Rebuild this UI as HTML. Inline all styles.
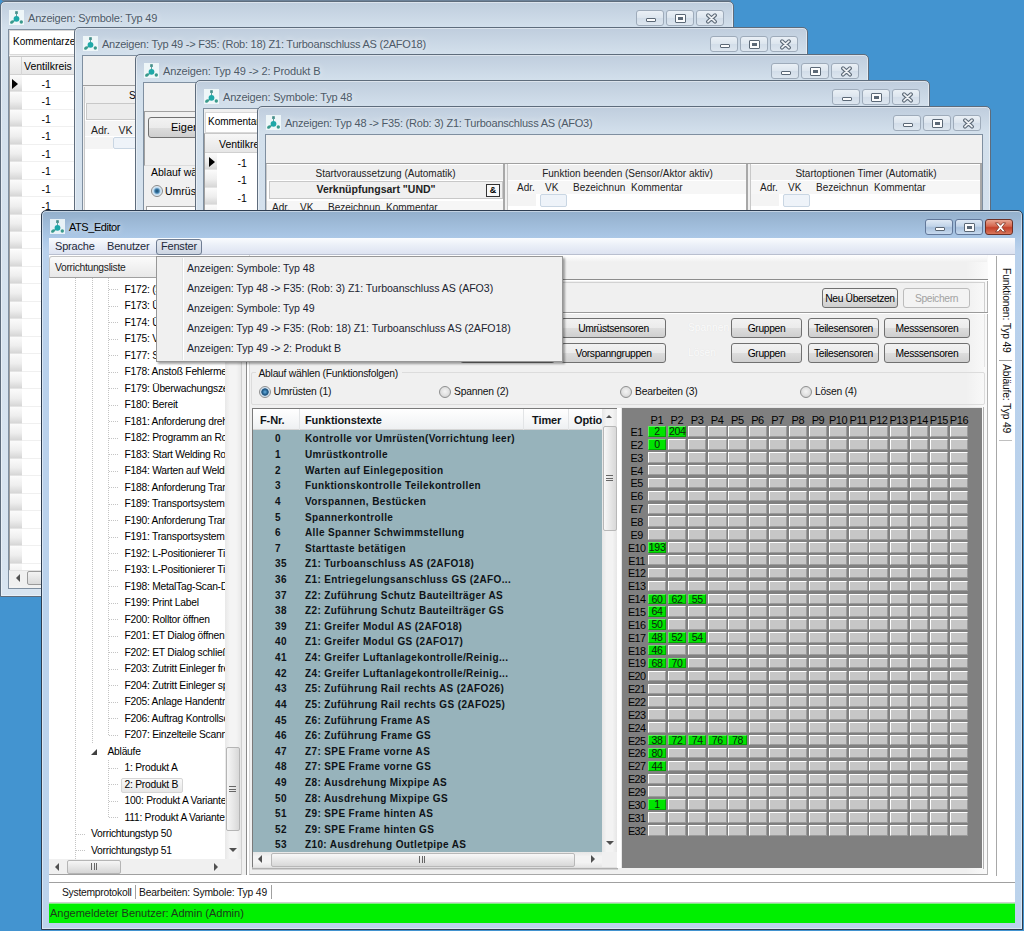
<!DOCTYPE html><html><head><meta charset="utf-8"><style>
*{box-sizing:border-box}
body{margin:0;width:1024px;height:931px;overflow:hidden;position:relative;background:#4394d0;font-family:"Liberation Sans",sans-serif;font-size:10px;color:#000}
.a{position:absolute}
.t{position:absolute;white-space:nowrap;line-height:1}
.win{position:absolute;border:1px solid #5e6c7c;border-radius:5px 5px 0 0;background:linear-gradient(#bfcddd 0,#d3e0ec 26px,#d8e4f0 100%);box-shadow:inset 0 0 0 1px rgba(255,255,255,.45)}
.win.act{border-color:#2e3d50;background:linear-gradient(#93afcb 0,#aac7e6 26px,#b9d1ec 40px,#bcd3ec 100%)}
.ttl{position:absolute;left:27px;top:10px;font-size:11px;color:#4d5a68;white-space:nowrap;letter-spacing:-0.1px;text-shadow:0 0 6px rgba(255,255,255,.9)}
.cli{position:absolute;background:#f0f0f0;border:1px solid #7f8fa0;overflow:hidden}
.tb{position:absolute;top:8px;height:16px;border:1px solid #9eabba;border-radius:3px;background:linear-gradient(#eaf0f6,#dce5ee 50%,#d2dde9 51%,#dde6ef)}
.btn{position:absolute;border:1px solid #707070;border-radius:3px;background:linear-gradient(#f2f2f2 0,#ebebeb 50%,#dddddd 51%,#cfcfcf 100%);text-align:center;font-size:10px;line-height:18px;white-space:nowrap;color:#000}

.tree{font-size:10.3px;letter-spacing:-0.25px;color:#000}
.dv{position:absolute;width:1px;background-image:linear-gradient(#c4c4c4 50%,transparent 50%);background-size:1px 2px}
.dh{position:absolute;height:1px;background-image:linear-gradient(90deg,#c4c4c4 50%,transparent 50%);background-size:2px 1px}
.cell{position:absolute;width:18.4px;height:10.6px;background:#c6c6c6;border-top:1px solid #fff;border-left:1px solid #fff;border-right:1px solid #9a9a9a;border-bottom:1px solid #9a9a9a}
.gc{background:#00e400;border-color:#5cf05c #00a800 #00a800 #5cf05c;font-size:10.5px;line-height:9px;text-align:center;color:#102010;letter-spacing:-0.3px}
.tr{font-weight:bold;font-size:11px;letter-spacing:-0.1px;color:#101418}
.tr2{font-weight:bold;font-size:10px;letter-spacing:0.38px;color:#0e1216}
.rad{position:absolute;width:12px;height:12px;border-radius:50%;border:1px solid #8e8f8f;background:radial-gradient(circle at 50% 45%,#f4f4f4 0,#e0e0e0 4px,#d0d0d0 6px)}
.rad.on{background:radial-gradient(circle at 50% 50%,#6ab0e0 0,#2a6a9a 2.2px,#1d4e78 3.3px,#c8dcec 4px,#e6eef6 6px)}
</style></head><body><div class="a" style="left:2px;top:0;width:729px;height:1px;background:#6c8198"></div><div class="win" style="left:0px;top:1px;width:734px;height:596px"><svg class="a" style="left:8px;top:8px" width="15" height="15" viewBox="0 0 15 15"><rect x="0" y="0" width="15" height="15" fill="#f4fcfc" opacity=".85"/><rect x="6.2" y="1.2" width="2.6" height="2.8" fill="#448c88"/><line x1="7.5" y1="3.5" x2="7.5" y2="7" stroke="#5aa4a0" stroke-width="1"/><line x1="7" y1="9.5" x2="3.5" y2="12" stroke="#3d9b90" stroke-width="1.4"/><ellipse cx="3" cy="12" rx="2.1" ry="1.5" transform="rotate(-35 3 12)" fill="#3a9a8c"/><circle cx="7.5" cy="8.8" r="2.9" fill="#1ea8a8"/><circle cx="12.3" cy="12" r="1.7" fill="#3a9a8c"/></svg><div class="ttl" style="letter-spacing:-0.18px">Anzeigen: Symbole: Typ 49</div><div class="tb" style="left:635px;width:28px;"><div class="a" style="left:8.5px;top:6.5px;width:10px;height:4.5px;border:1px solid #5b6876;border-radius:1px;background:#fbfcfd"></div></div><div class="tb" style="left:665px;width:28px;"><div class="a" style="left:8px;top:2.5px;width:11px;height:9px;border:1px solid #5b6876;border-radius:1px;background:#fbfcfd"><div class="a" style="left:2px;top:2px;width:5px;height:3px;background:#5b6876"></div></div></div><div class="tb" style="left:695px;width:28px;"><svg class="a" style="left:7.5px;top:2px" width="13" height="11" viewBox="0 0 13 11"><path d="M3 2.2 L10 8.6 M10 2.2 L3 8.6" stroke="#5d6a78" stroke-width="3.9" stroke-linecap="round"/><path d="M3 2.2 L10 8.6 M10 2.2 L3 8.6" stroke="#f0f3f6" stroke-width="1.7" stroke-linecap="round"/></svg></div><div class="cli" style="left:7px;top:27px;width:718px;height:560px"><div class="a" style="left:0px;top:0px;width:120px;height:25px;background:#fff;border:1px solid #d9d9d9"></div><div class="t" style="left:4px;top:7px;font-size:10px">Kommentarzeile</div><div class="a" style="left:0px;top:26px;width:710px;height:515px;background:#fff;border-left:1px solid #a0a0a0;border-top:1px solid #c8c8c8"></div><div class="a" style="left:1px;top:27px;width:700px;height:18px;background:linear-gradient(#f7f7f7,#e6e6e6);border-bottom:1px solid #d0d0d0"></div><div class="a" style="left:12px;top:27px;width:1px;height:18px;background:#d5d5d5"></div><div class="t" style="left:15px;top:31px;font-size:10.5px">Ventilkreis</div><div class="a" style="left:1px;top:45.0px;width:12px;height:17.45px;background:linear-gradient(#fbfbfb,#eeeeee 55%,#d6d6d6);border-bottom:1px solid #e4e4e4"></div><div class="a" style="left:13px;top:61.4px;width:690px;height:1px;background:#f0f0f0"></div><div class="t" style="left:32.5px;top:49.0px;font-size:10.5px">-1</div><div class="a" style="left:1px;top:62.45px;width:12px;height:17.45px;background:linear-gradient(#fbfbfb,#eeeeee 55%,#d6d6d6);border-bottom:1px solid #e4e4e4"></div><div class="a" style="left:13px;top:78.85px;width:690px;height:1px;background:#f0f0f0"></div><div class="t" style="left:32.5px;top:66.45px;font-size:10.5px">-1</div><div class="a" style="left:1px;top:79.9px;width:12px;height:17.45px;background:linear-gradient(#fbfbfb,#eeeeee 55%,#d6d6d6);border-bottom:1px solid #e4e4e4"></div><div class="a" style="left:13px;top:96.30000000000001px;width:690px;height:1px;background:#f0f0f0"></div><div class="t" style="left:32.5px;top:83.9px;font-size:10.5px">-1</div><div class="a" style="left:1px;top:97.35px;width:12px;height:17.45px;background:linear-gradient(#fbfbfb,#eeeeee 55%,#d6d6d6);border-bottom:1px solid #e4e4e4"></div><div class="a" style="left:13px;top:113.75px;width:690px;height:1px;background:#f0f0f0"></div><div class="t" style="left:32.5px;top:101.35px;font-size:10.5px">-1</div><div class="a" style="left:1px;top:114.80000000000001px;width:12px;height:17.45px;background:linear-gradient(#fbfbfb,#eeeeee 55%,#d6d6d6);border-bottom:1px solid #e4e4e4"></div><div class="a" style="left:13px;top:131.20000000000002px;width:690px;height:1px;background:#f0f0f0"></div><div class="t" style="left:32.5px;top:118.80000000000001px;font-size:10.5px">-1</div><div class="a" style="left:1px;top:132.25px;width:12px;height:17.45px;background:linear-gradient(#fbfbfb,#eeeeee 55%,#d6d6d6);border-bottom:1px solid #e4e4e4"></div><div class="a" style="left:13px;top:148.65px;width:690px;height:1px;background:#f0f0f0"></div><div class="t" style="left:32.5px;top:136.25px;font-size:10.5px">-1</div><div class="a" style="left:1px;top:149.7px;width:12px;height:17.45px;background:linear-gradient(#fbfbfb,#eeeeee 55%,#d6d6d6);border-bottom:1px solid #e4e4e4"></div><div class="a" style="left:13px;top:166.1px;width:690px;height:1px;background:#f0f0f0"></div><div class="t" style="left:32.5px;top:153.7px;font-size:10.5px">-1</div><div class="a" style="left:1px;top:167.14999999999998px;width:12px;height:17.45px;background:linear-gradient(#fbfbfb,#eeeeee 55%,#d6d6d6);border-bottom:1px solid #e4e4e4"></div><div class="a" style="left:13px;top:183.54999999999998px;width:690px;height:1px;background:#f0f0f0"></div><div class="t" style="left:32.5px;top:171.14999999999998px;font-size:10.5px">-1</div><div class="a" style="left:1px;top:184.6px;width:12px;height:17.45px;background:linear-gradient(#fbfbfb,#eeeeee 55%,#d6d6d6);border-bottom:1px solid #e4e4e4"></div><div class="a" style="left:13px;top:201.0px;width:690px;height:1px;background:#f0f0f0"></div><div class="t" style="left:32.5px;top:188.6px;font-size:10.5px">-1</div><div class="a" style="left:1px;top:202.04999999999998px;width:12px;height:17.45px;background:linear-gradient(#fbfbfb,#eeeeee 55%,#d6d6d6);border-bottom:1px solid #e4e4e4"></div><div class="a" style="left:13px;top:218.45px;width:690px;height:1px;background:#f0f0f0"></div><div class="a" style="left:1px;top:219.5px;width:12px;height:17.45px;background:linear-gradient(#fbfbfb,#eeeeee 55%,#d6d6d6);border-bottom:1px solid #e4e4e4"></div><div class="a" style="left:13px;top:235.9px;width:690px;height:1px;background:#f0f0f0"></div><div class="a" style="left:1px;top:236.95px;width:12px;height:17.45px;background:linear-gradient(#fbfbfb,#eeeeee 55%,#d6d6d6);border-bottom:1px solid #e4e4e4"></div><div class="a" style="left:13px;top:253.35px;width:690px;height:1px;background:#f0f0f0"></div><div class="a" style="left:1px;top:254.39999999999998px;width:12px;height:17.45px;background:linear-gradient(#fbfbfb,#eeeeee 55%,#d6d6d6);border-bottom:1px solid #e4e4e4"></div><div class="a" style="left:13px;top:270.79999999999995px;width:690px;height:1px;background:#f0f0f0"></div><div class="a" style="left:1px;top:271.85px;width:12px;height:17.45px;background:linear-gradient(#fbfbfb,#eeeeee 55%,#d6d6d6);border-bottom:1px solid #e4e4e4"></div><div class="a" style="left:13px;top:288.25px;width:690px;height:1px;background:#f0f0f0"></div><div class="a" style="left:1px;top:289.29999999999995px;width:12px;height:17.45px;background:linear-gradient(#fbfbfb,#eeeeee 55%,#d6d6d6);border-bottom:1px solid #e4e4e4"></div><div class="a" style="left:13px;top:305.69999999999993px;width:690px;height:1px;background:#f0f0f0"></div><div class="a" style="left:1px;top:306.75px;width:12px;height:17.45px;background:linear-gradient(#fbfbfb,#eeeeee 55%,#d6d6d6);border-bottom:1px solid #e4e4e4"></div><div class="a" style="left:13px;top:323.15px;width:690px;height:1px;background:#f0f0f0"></div><div class="a" style="left:1px;top:324.2px;width:12px;height:17.45px;background:linear-gradient(#fbfbfb,#eeeeee 55%,#d6d6d6);border-bottom:1px solid #e4e4e4"></div><div class="a" style="left:13px;top:340.59999999999997px;width:690px;height:1px;background:#f0f0f0"></div><div class="a" style="left:1px;top:341.65px;width:12px;height:17.45px;background:linear-gradient(#fbfbfb,#eeeeee 55%,#d6d6d6);border-bottom:1px solid #e4e4e4"></div><div class="a" style="left:13px;top:358.04999999999995px;width:690px;height:1px;background:#f0f0f0"></div><div class="a" style="left:1px;top:359.09999999999997px;width:12px;height:17.45px;background:linear-gradient(#fbfbfb,#eeeeee 55%,#d6d6d6);border-bottom:1px solid #e4e4e4"></div><div class="a" style="left:13px;top:375.49999999999994px;width:690px;height:1px;background:#f0f0f0"></div><div class="a" style="left:1px;top:376.55px;width:12px;height:17.45px;background:linear-gradient(#fbfbfb,#eeeeee 55%,#d6d6d6);border-bottom:1px solid #e4e4e4"></div><div class="a" style="left:13px;top:392.95px;width:690px;height:1px;background:#f0f0f0"></div><div class="a" style="left:1px;top:394.0px;width:12px;height:17.45px;background:linear-gradient(#fbfbfb,#eeeeee 55%,#d6d6d6);border-bottom:1px solid #e4e4e4"></div><div class="a" style="left:13px;top:410.4px;width:690px;height:1px;background:#f0f0f0"></div><div class="a" style="left:1px;top:411.45px;width:12px;height:17.45px;background:linear-gradient(#fbfbfb,#eeeeee 55%,#d6d6d6);border-bottom:1px solid #e4e4e4"></div><div class="a" style="left:13px;top:427.84999999999997px;width:690px;height:1px;background:#f0f0f0"></div><div class="a" style="left:1px;top:428.9px;width:12px;height:17.45px;background:linear-gradient(#fbfbfb,#eeeeee 55%,#d6d6d6);border-bottom:1px solid #e4e4e4"></div><div class="a" style="left:13px;top:445.29999999999995px;width:690px;height:1px;background:#f0f0f0"></div><div class="a" style="left:1px;top:446.34999999999997px;width:12px;height:17.45px;background:linear-gradient(#fbfbfb,#eeeeee 55%,#d6d6d6);border-bottom:1px solid #e4e4e4"></div><div class="a" style="left:13px;top:462.74999999999994px;width:690px;height:1px;background:#f0f0f0"></div><div class="a" style="left:1px;top:463.79999999999995px;width:12px;height:17.45px;background:linear-gradient(#fbfbfb,#eeeeee 55%,#d6d6d6);border-bottom:1px solid #e4e4e4"></div><div class="a" style="left:13px;top:480.19999999999993px;width:690px;height:1px;background:#f0f0f0"></div><div class="a" style="left:1px;top:481.25px;width:12px;height:17.45px;background:linear-gradient(#fbfbfb,#eeeeee 55%,#d6d6d6);border-bottom:1px solid #e4e4e4"></div><div class="a" style="left:13px;top:497.65px;width:690px;height:1px;background:#f0f0f0"></div><div class="a" style="left:1px;top:498.70000000000005px;width:12px;height:17.45px;background:linear-gradient(#fbfbfb,#eeeeee 55%,#d6d6d6);border-bottom:1px solid #e4e4e4"></div><div class="a" style="left:13px;top:515.1px;width:690px;height:1px;background:#f0f0f0"></div><div class="a" style="left:1px;top:516.15px;width:12px;height:17.45px;background:linear-gradient(#fbfbfb,#eeeeee 55%,#d6d6d6);border-bottom:1px solid #e4e4e4"></div><div class="a" style="left:13px;top:532.55px;width:690px;height:1px;background:#f0f0f0"></div><div class="a" style="left:1px;top:533.5999999999999px;width:12px;height:17.45px;background:linear-gradient(#fbfbfb,#eeeeee 55%,#d6d6d6);border-bottom:1px solid #e4e4e4"></div><div class="a" style="left:13px;top:549.9999999999999px;width:690px;height:1px;background:#f0f0f0"></div><div class="a" style="left:1px;top:551.05px;width:12px;height:17.45px;background:linear-gradient(#fbfbfb,#eeeeee 55%,#d6d6d6);border-bottom:1px solid #e4e4e4"></div><div class="a" style="left:13px;top:567.4499999999999px;width:690px;height:1px;background:#f0f0f0"></div><div class="a" style="left:3px;top:49px;width:0;height:0;border-left:6px solid #000;border-top:5px solid transparent;border-bottom:5px solid transparent"></div><div class="a" style="left:0px;top:540px;width:710px;height:16px;background:#f0f0f0;border-top:1px solid #e3e3e3"></div><div class="a" style="left:7px;top:544px;width:0;height:0;border-right:4px solid #505050;border-top:4px solid transparent;border-bottom:4px solid transparent"></div><div class="a" style="left:18px;top:541px;width:60px;height:14px;border:1px solid #9a9a9a;border-radius:2px;background:linear-gradient(#f3f3f3,#dadada)"></div></div></div><div class="win" style="left:74px;top:27px;width:734px;height:400px"><svg class="a" style="left:8px;top:8px" width="15" height="15" viewBox="0 0 15 15"><rect x="0" y="0" width="15" height="15" fill="#f4fcfc" opacity=".85"/><rect x="6.2" y="1.2" width="2.6" height="2.8" fill="#448c88"/><line x1="7.5" y1="3.5" x2="7.5" y2="7" stroke="#5aa4a0" stroke-width="1"/><line x1="7" y1="9.5" x2="3.5" y2="12" stroke="#3d9b90" stroke-width="1.4"/><ellipse cx="3" cy="12" rx="2.1" ry="1.5" transform="rotate(-35 3 12)" fill="#3a9a8c"/><circle cx="7.5" cy="8.8" r="2.9" fill="#1ea8a8"/><circle cx="12.3" cy="12" r="1.7" fill="#3a9a8c"/></svg><div class="ttl" style="letter-spacing:-0.24px">Anzeigen: Typ 49 -&gt; F35: (Rob: 18) Z1: Turboanschluss AS (2AFO18)</div><div class="tb" style="left:635px;width:28px;"><div class="a" style="left:8.5px;top:6.5px;width:10px;height:4.5px;border:1px solid #5b6876;border-radius:1px;background:#fbfcfd"></div></div><div class="tb" style="left:665px;width:28px;"><div class="a" style="left:8px;top:2.5px;width:11px;height:9px;border:1px solid #5b6876;border-radius:1px;background:#fbfcfd"><div class="a" style="left:2px;top:2px;width:5px;height:3px;background:#5b6876"></div></div></div><div class="tb" style="left:695px;width:28px;"><svg class="a" style="left:7.5px;top:2px" width="13" height="11" viewBox="0 0 13 11"><path d="M3 2.2 L10 8.6 M10 2.2 L3 8.6" stroke="#5d6a78" stroke-width="3.9" stroke-linecap="round"/><path d="M3 2.2 L10 8.6 M10 2.2 L3 8.6" stroke="#f0f3f6" stroke-width="1.7" stroke-linecap="round"/></svg></div><div class="cli" style="left:7px;top:27px;width:718px;height:360px"><div class="a" style="left:0;top:29px;width:720px;height:1px;background:#a0a0a0"></div><div class="a" style="left:1px;top:31px;width:700px;height:130px;background:#fff;border-left:1px solid #c8c8c8"></div><div class="a" style="left:2px;top:31px;width:700px;height:16px;background:#f0f0f0"></div><div class="t" style="left:46px;top:35px;font-size:10px">Startvoraussetzung</div><div class="a" style="left:3px;top:47px;width:700px;height:17px;background:#ececec;border:1px solid #c8c8c8"></div><div class="a" style="left:2px;top:65px;width:700px;height:15px;background:#f4f4f4"></div><div class="t" style="left:8px;top:69px;font-size:10.5px;color:#222">Adr.</div><div class="t" style="left:35.5px;top:69px;font-size:10.5px;color:#222">VK</div><div class="a" style="left:2px;top:81px;width:28px;height:12px;background:#f4f4f4"></div><div class="a" style="left:30px;top:81px;width:30px;height:12px;background:#eef3f9;border:1px solid #c9d6e3;border-radius:2px"></div></div></div><div class="win" style="left:135px;top:54px;width:734px;height:400px"><svg class="a" style="left:8px;top:8px" width="15" height="15" viewBox="0 0 15 15"><rect x="0" y="0" width="15" height="15" fill="#f4fcfc" opacity=".85"/><rect x="6.2" y="1.2" width="2.6" height="2.8" fill="#448c88"/><line x1="7.5" y1="3.5" x2="7.5" y2="7" stroke="#5aa4a0" stroke-width="1"/><line x1="7" y1="9.5" x2="3.5" y2="12" stroke="#3d9b90" stroke-width="1.4"/><ellipse cx="3" cy="12" rx="2.1" ry="1.5" transform="rotate(-35 3 12)" fill="#3a9a8c"/><circle cx="7.5" cy="8.8" r="2.9" fill="#1ea8a8"/><circle cx="12.3" cy="12" r="1.7" fill="#3a9a8c"/></svg><div class="ttl" style="letter-spacing:-0.13px">Anzeigen: Typ 49 -&gt; 2: Produkt B</div><div class="tb" style="left:635px;width:28px;"><div class="a" style="left:8.5px;top:6.5px;width:10px;height:4.5px;border:1px solid #5b6876;border-radius:1px;background:#fbfcfd"></div></div><div class="tb" style="left:665px;width:28px;"><div class="a" style="left:8px;top:2.5px;width:11px;height:9px;border:1px solid #5b6876;border-radius:1px;background:#fbfcfd"><div class="a" style="left:2px;top:2px;width:5px;height:3px;background:#5b6876"></div></div></div><div class="tb" style="left:695px;width:28px;"><svg class="a" style="left:7.5px;top:2px" width="13" height="11" viewBox="0 0 13 11"><path d="M3 2.2 L10 8.6 M10 2.2 L3 8.6" stroke="#5d6a78" stroke-width="3.9" stroke-linecap="round"/><path d="M3 2.2 L10 8.6 M10 2.2 L3 8.6" stroke="#f0f3f6" stroke-width="1.7" stroke-linecap="round"/></svg></div><div class="cli" style="left:7px;top:27px;width:718px;height:360px"><div class="a" style="left:0;top:28px;width:720px;height:1px;background:#a0a0a0"></div><div class="a" style="left:0px;top:29px;width:700px;height:54px;border-left:1px solid #a0a0a0;border-bottom:1px solid #dcdcdc"></div><div class="btn" style="left:4px;top:34px;width:110px;height:21px;line-height:19px;font-size:11px;text-align:left;padding-left:22px">Eigenschaften</div><div class="t" style="left:7px;top:84px;font-size:10.5px">Ablauf wählen (Funktionsfolgen)</div><div class="a" style="left:7px;top:102px;width:12px;height:12px;border-radius:50%;border:1px solid #8a8a8a;background:radial-gradient(circle,#1b4a6a 0,#3a7aa8 2px,#bcd8ee 3.5px,#e8f2fa 5px)"></div><div class="t" style="left:21px;top:103px;font-size:10.5px">Umrüsten (1)</div><div class="a" style="left:2px;top:123px;width:700px;height:10px;border-top:1px solid #a0a0a0;border-left:1px solid #a0a0a0;background:#fff"></div></div></div><div class="win" style="left:195px;top:80px;width:735px;height:400px"><svg class="a" style="left:8px;top:8px" width="15" height="15" viewBox="0 0 15 15"><rect x="0" y="0" width="15" height="15" fill="#f4fcfc" opacity=".85"/><rect x="6.2" y="1.2" width="2.6" height="2.8" fill="#448c88"/><line x1="7.5" y1="3.5" x2="7.5" y2="7" stroke="#5aa4a0" stroke-width="1"/><line x1="7" y1="9.5" x2="3.5" y2="12" stroke="#3d9b90" stroke-width="1.4"/><ellipse cx="3" cy="12" rx="2.1" ry="1.5" transform="rotate(-35 3 12)" fill="#3a9a8c"/><circle cx="7.5" cy="8.8" r="2.9" fill="#1ea8a8"/><circle cx="12.3" cy="12" r="1.7" fill="#3a9a8c"/></svg><div class="ttl" style="letter-spacing:-0.18px">Anzeigen: Symbole: Typ 48</div><div class="tb" style="left:636px;width:28px;"><div class="a" style="left:8.5px;top:6.5px;width:10px;height:4.5px;border:1px solid #5b6876;border-radius:1px;background:#fbfcfd"></div></div><div class="tb" style="left:666px;width:28px;"><div class="a" style="left:8px;top:2.5px;width:11px;height:9px;border:1px solid #5b6876;border-radius:1px;background:#fbfcfd"><div class="a" style="left:2px;top:2px;width:5px;height:3px;background:#5b6876"></div></div></div><div class="tb" style="left:696px;width:28px;"><svg class="a" style="left:7.5px;top:2px" width="13" height="11" viewBox="0 0 13 11"><path d="M3 2.2 L10 8.6 M10 2.2 L3 8.6" stroke="#5d6a78" stroke-width="3.9" stroke-linecap="round"/><path d="M3 2.2 L10 8.6 M10 2.2 L3 8.6" stroke="#f0f3f6" stroke-width="1.7" stroke-linecap="round"/></svg></div><div class="cli" style="left:7px;top:27px;width:719px;height:360px"><div class="a" style="left:1px;top:3px;width:200px;height:21px;background:#fff;border:1px solid #d9d9d9"></div><div class="t" style="left:4px;top:8px;font-size:10px">Kommentarzeile</div><div class="a" style="left:0px;top:24px;width:720px;height:100px;background:#fff;border-left:1px solid #a0a0a0;border-top:1px solid #c8c8c8"></div><div class="a" style="left:1px;top:25px;width:700px;height:19px;background:linear-gradient(#f7f7f7,#e6e6e6);border-bottom:1px solid #d0d0d0"></div><div class="t" style="left:15px;top:30px;font-size:10.5px">Ventilkreis</div><div class="a" style="left:1px;top:44.0px;width:12px;height:17.45px;background:linear-gradient(#fbfbfb,#eeeeee 55%,#d6d6d6);border-bottom:1px solid #e4e4e4"></div><div class="t" style="left:33.5px;top:49.0px;font-size:10.5px">-1</div><div class="a" style="left:1px;top:61.44999999999999px;width:12px;height:17.45px;background:linear-gradient(#fbfbfb,#eeeeee 55%,#d6d6d6);border-bottom:1px solid #e4e4e4"></div><div class="t" style="left:33.5px;top:66.44999999999999px;font-size:10.5px">-1</div><div class="a" style="left:1px;top:78.9px;width:12px;height:17.45px;background:linear-gradient(#fbfbfb,#eeeeee 55%,#d6d6d6);border-bottom:1px solid #e4e4e4"></div><div class="t" style="left:33.5px;top:83.9px;font-size:10.5px">-1</div><div class="a" style="left:1px;top:96.35px;width:12px;height:17.45px;background:linear-gradient(#fbfbfb,#eeeeee 55%,#d6d6d6);border-bottom:1px solid #e4e4e4"></div><div class="t" style="left:33.5px;top:101.35px;font-size:10.5px">-1</div><div class="a" style="left:5px;top:48px;width:0;height:0;border-left:6px solid #000;border-top:5px solid transparent;border-bottom:5px solid transparent"></div></div></div><div class="win" style="left:257px;top:106px;width:734px;height:400px"><svg class="a" style="left:8px;top:8px" width="15" height="15" viewBox="0 0 15 15"><rect x="0" y="0" width="15" height="15" fill="#f4fcfc" opacity=".85"/><rect x="6.2" y="1.2" width="2.6" height="2.8" fill="#448c88"/><line x1="7.5" y1="3.5" x2="7.5" y2="7" stroke="#5aa4a0" stroke-width="1"/><line x1="7" y1="9.5" x2="3.5" y2="12" stroke="#3d9b90" stroke-width="1.4"/><ellipse cx="3" cy="12" rx="2.1" ry="1.5" transform="rotate(-35 3 12)" fill="#3a9a8c"/><circle cx="7.5" cy="8.8" r="2.9" fill="#1ea8a8"/><circle cx="12.3" cy="12" r="1.7" fill="#3a9a8c"/></svg><div class="ttl" style="letter-spacing:-0.22px">Anzeigen: Typ 48 -&gt; F35: (Rob: 3) Z1: Turboanschluss AS (AFO3)</div><div class="tb" style="left:635px;width:28px;"><div class="a" style="left:8.5px;top:6.5px;width:10px;height:4.5px;border:1px solid #5b6876;border-radius:1px;background:#fbfcfd"></div></div><div class="tb" style="left:665px;width:28px;"><div class="a" style="left:8px;top:2.5px;width:11px;height:9px;border:1px solid #5b6876;border-radius:1px;background:#fbfcfd"><div class="a" style="left:2px;top:2px;width:5px;height:3px;background:#5b6876"></div></div></div><div class="tb" style="left:695px;width:28px;"><svg class="a" style="left:7.5px;top:2px" width="13" height="11" viewBox="0 0 13 11"><path d="M3 2.2 L10 8.6 M10 2.2 L3 8.6" stroke="#5d6a78" stroke-width="3.9" stroke-linecap="round"/><path d="M3 2.2 L10 8.6 M10 2.2 L3 8.6" stroke="#f0f3f6" stroke-width="1.7" stroke-linecap="round"/></svg></div><div class="cli" style="left:7px;top:27px;width:718px;height:360px"><div class="a" style="left:0;top:28px;width:720px;height:1px;background:#a0a0a0"></div><div class="a" style="left:0px;top:29px;width:239px;height:60px;background:#fff;border-left:1px solid #c8c8c8;border-right:2px solid #a8a8a8"></div><div class="a" style="left:1px;top:30px;width:236px;height:15px;background:#efefef"></div><div class="t" style="left:0px;width:239px;text-align:center;top:34px;font-size:10px;color:#222">Startvoraussetzung (Automatik)</div><div class="a" style="left:3px;top:46px;width:234px;height:18px;background:#f0f0f0;border:1px solid #c8c8c8"></div><div class="t" style="left:3px;width:214px;text-align:center;top:49px;font-size:10.5px;font-weight:bold;color:#222">Verknüpfungsart "UND"</div><div class="a" style="left:220px;top:49px;width:14px;height:13px;border:1px solid #333;background:#f8f8f8;font-size:9px;font-weight:bold;text-align:center;line-height:11px">&amp;</div><div class="a" style="left:1px;top:66px;width:236px;height:13px;background:#f6f6f6"></div><div class="t" style="left:6px;top:67.5px;font-size:10px;color:#222">Adr.</div><div class="t" style="left:34px;top:67.5px;font-size:10px;color:#222">VK</div><div class="t" style="left:62px;top:67.5px;font-size:10px;color:#222">Bezeichnun</div><div class="t" style="left:120px;top:67.5px;font-size:10px;color:#222">Kommentar</div><div class="a" style="left:241px;top:29px;width:241px;height:60px;background:#fff;border-left:1px solid #c8c8c8;border-right:2px solid #a8a8a8"></div><div class="a" style="left:242px;top:30px;width:238px;height:15px;background:#efefef"></div><div class="t" style="left:241px;width:241px;text-align:center;top:34px;font-size:10px;color:#222">Funktion beenden (Sensor/Aktor aktiv)</div><div class="a" style="left:242px;top:46px;width:238px;height:13px;background:#f6f6f6"></div><div class="t" style="left:251px;top:47.5px;font-size:10px;color:#222">Adr.</div><div class="t" style="left:279px;top:47.5px;font-size:10px;color:#222">VK</div><div class="t" style="left:307px;top:47.5px;font-size:10px;color:#222">Bezeichnun</div><div class="t" style="left:365px;top:47.5px;font-size:10px;color:#222">Kommentar</div><div class="a" style="left:242px;top:59px;width:28px;height:12px;background:#f4f4f4"></div><div class="a" style="left:274px;top:59px;width:27px;height:13px;background:#eef3f9;border:1px solid #c9d6e3;border-radius:2px"></div><div class="a" style="left:484px;top:29px;width:232px;height:60px;background:#fff;border-left:1px solid #c8c8c8;border-right:2px solid #a8a8a8"></div><div class="a" style="left:485px;top:30px;width:229px;height:15px;background:#efefef"></div><div class="t" style="left:484px;width:232px;text-align:center;top:34px;font-size:10px;color:#222">Startoptionen Timer (Automatik)</div><div class="a" style="left:485px;top:46px;width:229px;height:13px;background:#f6f6f6"></div><div class="t" style="left:494px;top:47.5px;font-size:10px;color:#222">Adr.</div><div class="t" style="left:522px;top:47.5px;font-size:10px;color:#222">VK</div><div class="t" style="left:550px;top:47.5px;font-size:10px;color:#222">Bezeichnun</div><div class="t" style="left:608px;top:47.5px;font-size:10px;color:#222">Kommentar</div><div class="a" style="left:485px;top:59px;width:28px;height:12px;background:#f4f4f4"></div><div class="a" style="left:517px;top:59px;width:27px;height:13px;background:#eef3f9;border:1px solid #c9d6e3;border-radius:2px"></div></div></div><div class="win act" style="left:41px;top:210px;width:982px;height:720px"><svg class="a" style="left:8px;top:8px" width="15" height="15" viewBox="0 0 15 15"><rect x="0" y="0" width="15" height="15" fill="#f4fcfc" opacity=".85"/><rect x="6.2" y="1.2" width="2.6" height="2.8" fill="#448c88"/><line x1="7.5" y1="3.5" x2="7.5" y2="7" stroke="#5aa4a0" stroke-width="1"/><line x1="7" y1="9.5" x2="3.5" y2="12" stroke="#3d9b90" stroke-width="1.4"/><ellipse cx="3" cy="12" rx="2.1" ry="1.5" transform="rotate(-35 3 12)" fill="#3a9a8c"/><circle cx="7.5" cy="8.8" r="2.9" fill="#1ea8a8"/><circle cx="12.3" cy="12" r="1.7" fill="#3a9a8c"/></svg><div class="ttl" style="color:#000;letter-spacing:-0.45px">ATS_Editor</div><div class="tb" style="left:883px;width:28px;background:linear-gradient(#dfe9f5,#c0d3e8 45%,#a9c1dd 55%,#c6d9ee);border-color:#62789a"><div class="a" style="left:8.5px;top:6.5px;width:10px;height:4.5px;border:1px solid #5b6876;border-radius:1px;background:#fbfcfd"></div></div><div class="tb" style="left:913px;width:28px;background:linear-gradient(#dfe9f5,#c0d3e8 45%,#a9c1dd 55%,#c6d9ee);border-color:#62789a"><div class="a" style="left:8px;top:2.5px;width:11px;height:9px;border:1px solid #5b6876;border-radius:1px;background:#fbfcfd"><div class="a" style="left:2px;top:2px;width:5px;height:3px;background:#5b6876"></div></div></div><div class="tb" style="left:943px;width:28px;background:linear-gradient(#e9a692,#d4664e 45%,#c4412a 55%,#d9785c);border-color:#6d3026"><svg class="a" style="left:7.5px;top:2px" width="13" height="11" viewBox="0 0 13 11"><path d="M1.5 0.8 L4.3 0.8 L6.5 3.3 L8.7 0.8 L11.5 0.8 L8 5.3 L11.5 9.8 L8.7 9.8 L6.5 7.3 L4.3 9.8 L1.5 9.8 L5 5.3 Z" fill="#fff" stroke="#7a3020" stroke-width="0.8"/></svg></div><div class="cli" style="left:7px;top:27px;width:966px;height:685px"></div></div><div class="a" style="left:49px;top:238px;width:966px;height:17px;background:linear-gradient(#fafcfe,#e9eef7 50%,#dde3f1);border-bottom:1px solid #b9bfcf"></div><div class="t" style="left:55px;top:241px;font-size:11px;letter-spacing:-0.2px;color:#1e2a3a">Sprache</div><div class="t" style="left:107px;top:241px;font-size:11px;letter-spacing:-0.2px;color:#1e2a3a">Benutzer</div><div class="a" style="left:156px;top:239px;width:46px;height:16px;border:1px solid #6f7d93;border-radius:3px;background:linear-gradient(#e6ebf2,#cdd5e2)"></div><div class="t" style="left:161px;top:241px;font-size:11px;letter-spacing:-0.2px;color:#1e2a3a">Fenster</div><div class="a" style="left:49px;top:255px;width:966px;height:648px;background:#fff"></div><div class="a" style="left:249px;top:255px;width:739px;height:620px;background:linear-gradient(90deg,#f0f0f0 97%,#fafafa);border-left:1px solid #dadada;border-bottom:1px solid #a8a8a8"></div><div class="a" style="left:987px;top:279px;width:1px;height:596px;background:#b4b4b4"></div><div class="a" style="left:250px;top:255px;width:737px;height:7px;background:linear-gradient(#fff,#f0f0f0)"></div><div class="a" style="left:49px;top:256px;width:192px;height:22px;background:linear-gradient(#fbfbfb,#e8e8e8);border:1px solid #c4c4c4;border-bottom-color:#a0a0a0;border-radius:3px 3px 0 0"></div><div class="t" style="left:55px;top:263px;font-size:10.3px;letter-spacing:-0.3px;color:#222">Vorrichtungsliste</div><div class="a" style="left:49px;top:278px;width:176px;height:581px;background:#fff"></div><div class="a" style="left:49px;top:859px;width:192px;height:16px;background:#f0f0f0;border-bottom:1px solid #a0a0a0"></div><div class="a" style="left:225px;top:278px;width:16px;height:581px;background:linear-gradient(90deg,#e8e8e8,#f4f4f4 30%,#f4f4f4 70%,#e8e8e8)"></div><div class="a" style="left:225.5px;top:747px;width:14px;height:84px;border:1px solid #b5b5b5;border-radius:2px;background:linear-gradient(90deg,#f6f6f6,#e8e8e8 50%,#d8d8d8)"></div><div class="a" style="left:229px;top:786px;width:7px;height:6px;border-top:1px solid #666;border-bottom:1px solid #666"></div><div class="a" style="left:229px;top:788.5px;width:7px;height:1px;background:#666"></div><div class="a" style="left:229px;top:848px;width:0;height:0;border-top:4px solid #505050;border-left:4px solid transparent;border-right:4px solid transparent"></div><div class="a" style="left:67px;top:860px;width:54px;height:14px;border:1px solid #b5b5b5;border-radius:2px;background:linear-gradient(#f6f6f6,#e6e6e6 50%,#d6d6d6)"></div><div class="a" style="left:91px;top:863px;width:6px;height:7px;border-left:1px solid #666;border-right:1px solid #666"></div><div class="a" style="left:93.5px;top:863px;width:1px;height:7px;background:#666"></div><div class="a" style="left:55px;top:863px;width:0;height:0;border-right:4px solid #505050;border-top:4px solid transparent;border-bottom:4px solid transparent"></div><div class="a" style="left:214px;top:863px;width:0;height:0;border-left:4px solid #505050;border-top:4px solid transparent;border-bottom:4px solid transparent"></div><div class="a" style="left:241px;top:256px;width:5px;height:619px;background:#f0f0f0;border-left:1px solid #d0d0d0"></div><div class="a" style="left:246px;top:256px;width:1px;height:619px;background:#8a8a8a"></div><div class="a" style="left:247px;top:256px;width:2px;height:619px;background:#fff"></div><div class="dv" style="left:75px;top:278px;height:581px"></div><div class="dv" style="left:92px;top:278px;height:465.4px"></div><div class="dv" style="left:108px;top:278px;height:457.9px"></div><div class="dv" style="left:108px;top:760.4px;height:58.0px"></div><div class="a" style="left:49px;top:278px;width:176px;height:581px;overflow:hidden"><div class="a" style="left:-49px;top:-278px;width:300px;height:900px"><div class="dh" style="left:109px;top:289.0px;width:9px"></div><div class="t tree" style="left:124.5px;top:284.9px">F172: (Sperre) Fehlerquit</div><div class="dh" style="left:109px;top:305.5px;width:9px"></div><div class="t tree" style="left:124.5px;top:301.4px">F173: Überwachung</div><div class="dh" style="left:109px;top:322.0px;width:9px"></div><div class="t tree" style="left:124.5px;top:317.9px">F174: Überwachung</div><div class="dh" style="left:109px;top:338.5px;width:9px"></div><div class="t tree" style="left:124.5px;top:334.4px">F175: Vorrichtung</div><div class="dh" style="left:109px;top:355.0px;width:9px"></div><div class="t tree" style="left:124.5px;top:350.9px">F177: Störung</div><div class="dh" style="left:109px;top:371.5px;width:9px"></div><div class="t tree" style="left:124.5px;top:367.4px">F178: Anstoß Fehlermeldung</div><div class="dh" style="left:109px;top:388.0px;width:9px"></div><div class="t tree" style="left:124.5px;top:383.9px">F179: Überwachungszeit</div><div class="dh" style="left:109px;top:404.5px;width:9px"></div><div class="t tree" style="left:124.5px;top:400.4px">F180: Bereit</div><div class="dh" style="left:109px;top:421.0px;width:9px"></div><div class="t tree" style="left:124.5px;top:416.9px">F181: Anforderung drehen</div><div class="dh" style="left:109px;top:437.5px;width:9px"></div><div class="t tree" style="left:124.5px;top:433.4px">F182: Programm an Roboter</div><div class="dh" style="left:109px;top:454.0px;width:9px"></div><div class="t tree" style="left:124.5px;top:449.9px">F183: Start Welding Roboter</div><div class="dh" style="left:109px;top:470.5px;width:9px"></div><div class="t tree" style="left:124.5px;top:466.4px">F184: Warten auf Welding</div><div class="dh" style="left:109px;top:487.0px;width:9px"></div><div class="t tree" style="left:124.5px;top:482.9px">F188: Anforderung Transport</div><div class="dh" style="left:109px;top:503.5px;width:9px"></div><div class="t tree" style="left:124.5px;top:499.4px">F189: Transportsystem</div><div class="dh" style="left:109px;top:520.0px;width:9px"></div><div class="t tree" style="left:124.5px;top:515.9px">F190: Anforderung Transport</div><div class="dh" style="left:109px;top:536.5px;width:9px"></div><div class="t tree" style="left:124.5px;top:532.4px">F191: Transportsystem</div><div class="dh" style="left:109px;top:553.0px;width:9px"></div><div class="t tree" style="left:124.5px;top:548.9px">F192: L-Positionierer Tisch</div><div class="dh" style="left:109px;top:569.5px;width:9px"></div><div class="t tree" style="left:124.5px;top:565.4px">F193: L-Positionierer Tisch</div><div class="dh" style="left:109px;top:586.0px;width:9px"></div><div class="t tree" style="left:124.5px;top:581.9px">F198: MetalTag-Scan-Daten</div><div class="dh" style="left:109px;top:602.5px;width:9px"></div><div class="t tree" style="left:124.5px;top:598.4px">F199: Print Label</div><div class="dh" style="left:109px;top:619.0px;width:9px"></div><div class="t tree" style="left:124.5px;top:614.9px">F200: Rolltor öffnen</div><div class="dh" style="left:109px;top:635.5px;width:9px"></div><div class="t tree" style="left:124.5px;top:631.4px">F201: ET Dialog öffnen</div><div class="dh" style="left:109px;top:652.0px;width:9px"></div><div class="t tree" style="left:124.5px;top:647.9px">F202: ET Dialog schließen</div><div class="dh" style="left:109px;top:668.5px;width:9px"></div><div class="t tree" style="left:124.5px;top:664.4px">F203: Zutritt Einleger frei</div><div class="dh" style="left:109px;top:685.0px;width:9px"></div><div class="t tree" style="left:124.5px;top:680.9px">F204: Zutritt Einleger sperren</div><div class="dh" style="left:109px;top:701.5px;width:9px"></div><div class="t tree" style="left:124.5px;top:697.4px">F205: Anlage Handentnahme</div><div class="dh" style="left:109px;top:718.0px;width:9px"></div><div class="t tree" style="left:124.5px;top:713.9px">F206: Auftrag Kontrollscan</div><div class="dh" style="left:109px;top:734.5px;width:9px"></div><div class="t tree" style="left:124.5px;top:730.4px">F207: Einzelteile Scannen</div><div class="a" style="left:91px;top:749.4px;width:0;height:0;border-bottom:6px solid #404040;border-left:6px solid transparent"></div><div class="t tree" style="left:107.5px;top:746.9px">Abläufe</div><div class="dh" style="left:109px;top:767.5px;width:9px"></div><div class="t tree" style="left:124.5px;top:763.4px">1: Produkt A</div><div class="dh" style="left:109px;top:784.0px;width:9px"></div><div class="a" style="left:120.5px;top:777.9px;width:62px;height:15px;border:1px solid #d5d5d5;border-radius:2px;background:linear-gradient(#fafafa,#e6e6e6)"></div><div class="t tree" style="left:124.5px;top:779.9px">2: Produkt B</div><div class="dh" style="left:109px;top:800.5px;width:9px"></div><div class="t tree" style="left:124.5px;top:796.4px">100: Produkt A Variante 1</div><div class="dh" style="left:109px;top:817.0px;width:9px"></div><div class="t tree" style="left:124.5px;top:812.9px">111: Produkt A Variante 2</div><div class="dh" style="left:76px;top:833.5px;width:9px"></div><div class="t tree" style="left:91px;top:829.4px">Vorrichtungstyp 50</div><div class="dh" style="left:76px;top:850.0px;width:9px"></div><div class="t tree" style="left:91px;top:845.9px">Vorrichtungstyp 51</div></div></div><div class="a" style="left:251px;top:279px;width:737px;height:1px;background:#8c8c8c"></div><div class="a" style="left:251px;top:280px;width:737px;height:1px;background:#fff"></div><div class="a" style="left:253px;top:282px;width:732px;height:1px;background:#d2d2d2"></div><div class="a" style="left:251px;top:312px;width:737px;height:1px;background:#9a9a9a"></div><div class="a" style="left:251px;top:313px;width:737px;height:1px;background:#fff"></div><div class="a" style="left:984px;top:282px;width:1px;height:30px;background:#cfcfcf"></div><div class="a" style="left:984px;top:314px;width:1px;height:53px;background:#e4e4e4"></div><div class="btn" style="left:822px;top:288px;width:76px;height:20px;line-height:19px;font-size:10.3px;letter-spacing:-0.35px;">Neu Übersetzen</div><div class="btn" style="left:903px;top:288px;width:67px;height:20px;line-height:19px;font-size:10.3px;letter-spacing:-0.35px;border-color:#bcbcbc;color:#a2a2a2;background:#f3f3f3;">Speichern</div><div class="btn" style="left:460px;top:318px;width:95px;height:20px;line-height:19px;font-size:10.3px;letter-spacing:-0.35px;">Umrüstgruppen</div><div class="btn" style="left:561px;top:318px;width:105px;height:20px;line-height:19px;font-size:10.3px;letter-spacing:-0.35px;">Umrüstsensoren</div><div class="btn" style="left:731px;top:318px;width:71px;height:20px;line-height:19px;font-size:10.3px;letter-spacing:-0.35px;">Gruppen</div><div class="btn" style="left:808px;top:318px;width:71px;height:20px;line-height:19px;font-size:10.3px;letter-spacing:-0.35px;">Teilesensoren</div><div class="btn" style="left:884px;top:318px;width:86px;height:20px;line-height:19px;font-size:10.3px;letter-spacing:-0.35px;">Messsensoren</div><div class="btn" style="left:460px;top:343px;width:95px;height:20px;line-height:19px;font-size:10.3px;letter-spacing:-0.35px;">Umrüstgruppen</div><div class="btn" style="left:561px;top:343px;width:105px;height:20px;line-height:19px;font-size:10.3px;letter-spacing:-0.35px;">Vorspanngruppen</div><div class="btn" style="left:731px;top:343px;width:71px;height:20px;line-height:19px;font-size:10.3px;letter-spacing:-0.35px;">Gruppen</div><div class="btn" style="left:808px;top:343px;width:71px;height:20px;line-height:19px;font-size:10.3px;letter-spacing:-0.35px;">Teilesensoren</div><div class="btn" style="left:884px;top:343px;width:86px;height:20px;line-height:19px;font-size:10.3px;letter-spacing:-0.35px;">Messsensoren</div><div class="t" style="left:688px;top:323px;font-size:10.3px;color:#fbfbfb;text-shadow:0 0 1px #ddd">Spannen</div><div class="t" style="left:688px;top:348px;font-size:10.3px;color:#fbfbfb;text-shadow:0 0 1px #ddd">Lösen</div><div class="a" style="left:251px;top:372px;width:734px;height:33px;border:1px solid #dcdcdc;border-radius:2px"></div><div class="a" style="left:256px;top:366px;width:146px;height:12px;background:#f0f0f0"></div><div class="t" style="left:258.5px;top:368.5px;font-size:10.3px;letter-spacing:-0.25px;color:#111">Ablauf wählen (Funktionsfolgen)</div><div class="rad on" style="left:258.5px;top:385.5px"></div><div class="t" style="left:273.5px;top:387px;font-size:10.3px;letter-spacing:-0.2px;color:#111">Umrüsten (1)</div><div class="rad" style="left:439px;top:385.5px"></div><div class="t" style="left:454px;top:387px;font-size:10.3px;letter-spacing:-0.2px;color:#111">Spannen (2)</div><div class="rad" style="left:620px;top:385.5px"></div><div class="t" style="left:635px;top:387px;font-size:10.3px;letter-spacing:-0.2px;color:#111">Bearbeiten (3)</div><div class="rad" style="left:800px;top:385.5px"></div><div class="t" style="left:815px;top:387px;font-size:10.3px;letter-spacing:-0.2px;color:#111">Lösen (4)</div><div class="a" style="left:252px;top:408px;width:366px;height:460px;background:#fff;border:1px solid #7a7a7a;border-right-color:#e0e0e0;border-bottom-color:#e0e0e0"></div><div class="a" style="left:253px;top:409px;width:349px;height:21px;background:linear-gradient(#ffffff,#f7f8f9 50%,#eef0f2);border-bottom:1px solid #d5d5d5"></div><div class="a" style="left:299px;top:409px;width:1px;height:21px;background:#e2e4e6"></div><div class="a" style="left:523px;top:409px;width:1px;height:21px;background:#e2e4e6"></div><div class="a" style="left:568px;top:409px;width:1px;height:21px;background:#e2e4e6"></div><div class="t tr" style="left:260px;top:414.5px">F-Nr.</div><div class="t tr" style="left:305px;top:414.5px">Funktionstexte</div><div class="t tr" style="left:532px;top:414.5px">Timer</div><div class="t tr" style="left:574px;top:414.5px">Optio</div><div class="a" style="left:253px;top:430px;width:349px;height:422px;background:#97b3bb"></div><div class="a" style="left:253px;top:430px;width:349px;height:422px;overflow:hidden"><div class="a" style="left:-253px;top:-430px;width:700px;height:900px"><div class="t tr2" style="left:275px;top:434.4px">0</div><div class="t tr2" style="left:305px;top:434.4px">Kontrolle vor Umrüsten(Vorrichtung leer)</div><div class="t tr2" style="left:275px;top:450.0px">1</div><div class="t tr2" style="left:305px;top:450.0px">Umrüstkontrolle</div><div class="t tr2" style="left:275px;top:465.6px">2</div><div class="t tr2" style="left:305px;top:465.6px">Warten auf Einlegeposition</div><div class="t tr2" style="left:275px;top:481.2px">3</div><div class="t tr2" style="left:305px;top:481.2px">Funktionskontrolle Teilekontrollen</div><div class="t tr2" style="left:275px;top:496.9px">4</div><div class="t tr2" style="left:305px;top:496.9px">Vorspannen, Bestücken</div><div class="t tr2" style="left:275px;top:512.5px">5</div><div class="t tr2" style="left:305px;top:512.5px">Spannerkontrolle</div><div class="t tr2" style="left:275px;top:528.1px">6</div><div class="t tr2" style="left:305px;top:528.1px">Alle Spanner Schwimmstellung</div><div class="t tr2" style="left:275px;top:543.7px">7</div><div class="t tr2" style="left:305px;top:543.7px">Starttaste betätigen</div><div class="t tr2" style="left:275px;top:559.3px">35</div><div class="t tr2" style="left:305px;top:559.3px">Z1: Turboanschluss AS (2AFO18)</div><div class="t tr2" style="left:275px;top:574.9px">36</div><div class="t tr2" style="left:305px;top:574.9px">Z1: Entriegelungsanschluss GS (2AFO...</div><div class="t tr2" style="left:275px;top:590.5px">37</div><div class="t tr2" style="left:305px;top:590.5px">Z2: Zuführung Schutz Bauteilträger AS</div><div class="t tr2" style="left:275px;top:606.2px">38</div><div class="t tr2" style="left:305px;top:606.2px">Z2: Zuführung Schutz Bauteilträger GS</div><div class="t tr2" style="left:275px;top:621.8px">39</div><div class="t tr2" style="left:305px;top:621.8px">Z1: Greifer Modul AS (2AFO18)</div><div class="t tr2" style="left:275px;top:637.4px">40</div><div class="t tr2" style="left:305px;top:637.4px">Z1: Greifer Modul GS (2AFO17)</div><div class="t tr2" style="left:275px;top:653.0px">41</div><div class="t tr2" style="left:305px;top:653.0px">Z4: Greifer Luftanlagekontrolle/Reinig...</div><div class="t tr2" style="left:275px;top:668.6px">42</div><div class="t tr2" style="left:305px;top:668.6px">Z4: Greifer Luftanlagekontrolle/Reinig...</div><div class="t tr2" style="left:275px;top:684.2px">43</div><div class="t tr2" style="left:305px;top:684.2px">Z5: Zuführung Rail rechts AS (2AFO26)</div><div class="t tr2" style="left:275px;top:699.9px">44</div><div class="t tr2" style="left:305px;top:699.9px">Z5: Zuführung Rail rechts GS (2AFO25)</div><div class="t tr2" style="left:275px;top:715.5px">45</div><div class="t tr2" style="left:305px;top:715.5px">Z6: Zuführung Frame AS</div><div class="t tr2" style="left:275px;top:731.1px">46</div><div class="t tr2" style="left:305px;top:731.1px">Z6: Zuführung Frame GS</div><div class="t tr2" style="left:275px;top:746.7px">47</div><div class="t tr2" style="left:305px;top:746.7px">Z7: SPE Frame vorne AS</div><div class="t tr2" style="left:275px;top:762.3px">48</div><div class="t tr2" style="left:305px;top:762.3px">Z7: SPE Frame vorne GS</div><div class="t tr2" style="left:275px;top:777.9px">49</div><div class="t tr2" style="left:305px;top:777.9px">Z8: Ausdrehung Mixpipe AS</div><div class="t tr2" style="left:275px;top:793.5px">50</div><div class="t tr2" style="left:305px;top:793.5px">Z8: Ausdrehung Mixpipe GS</div><div class="t tr2" style="left:275px;top:809.2px">51</div><div class="t tr2" style="left:305px;top:809.2px">Z9: SPE Frame hinten AS</div><div class="t tr2" style="left:275px;top:824.8px">52</div><div class="t tr2" style="left:305px;top:824.8px">Z9: SPE Frame hinten GS</div><div class="t tr2" style="left:275px;top:840.4px">53</div><div class="t tr2" style="left:305px;top:840.4px">Z10: Ausdrehung Outletpipe AS</div></div></div><div class="a" style="left:602px;top:409px;width:15px;height:443px;background:linear-gradient(90deg,#e6e6e6,#f3f3f3 30%,#f3f3f3 70%,#e6e6e6)"></div><div class="a" style="left:606px;top:415px;width:0;height:0;border-bottom:3.5px solid #505050;border-left:3.5px solid transparent;border-right:3.5px solid transparent"></div><div class="a" style="left:602.5px;top:426px;width:14px;height:105px;border:1px solid #b8b8b8;border-radius:2px;background:linear-gradient(90deg,#f8f8f8,#e8e8e8 50%,#d8d8d8)"></div><div class="a" style="left:606px;top:475px;width:7px;height:6px;border-top:1px solid #666;border-bottom:1px solid #666"></div><div class="a" style="left:606px;top:477.5px;width:7px;height:1px;background:#666"></div><div class="a" style="left:606px;top:841px;width:0;height:0;border-top:4px solid #505050;border-left:4px solid transparent;border-right:4px solid transparent"></div><div class="a" style="left:253px;top:852px;width:364px;height:15px;background:linear-gradient(#e6e6e6,#f3f3f3 30%,#f3f3f3 70%,#e6e6e6)"></div><div class="a" style="left:258px;top:855px;width:0;height:0;border-right:4px solid #505050;border-top:4px solid transparent;border-bottom:4px solid transparent"></div><div class="a" style="left:591px;top:855px;width:0;height:0;border-left:4px solid #505050;border-top:4px solid transparent;border-bottom:4px solid transparent"></div><div class="a" style="left:271px;top:852.5px;width:304px;height:14px;border:1px solid #b8b8b8;border-radius:2px;background:linear-gradient(#f8f8f8,#e8e8e8 50%,#d8d8d8)"></div><div class="a" style="left:419px;top:856px;width:6px;height:7px;border-left:1px solid #666;border-right:1px solid #666"></div><div class="a" style="left:421.5px;top:856px;width:1px;height:7px;background:#666"></div><div class="a" style="left:602px;top:852px;width:15px;height:15px;background:#f0f0f0"></div><div class="a" style="left:617px;top:408px;width:4px;height:460px;background:#fff"></div><div class="a" style="left:621px;top:407px;width:362px;height:461px;background:#808080;border-left:1px solid #e8e8e8;border-top:1px solid #e8e8e8"></div><div class="a" style="left:252px;top:868px;width:366px;height:2px;background:linear-gradient(#a0a0a0,#e0e0e0)"></div><div class="a" style="left:982px;top:407px;width:2px;height:462px;background:#fafafa;border-right:1px solid #b0b0b0"></div><div class="t" style="left:643.8px;width:26px;text-align:center;top:415px;font-size:11px;letter-spacing:-0.4px;color:#000">P1</div><div class="t" style="left:663.9px;width:26px;text-align:center;top:415px;font-size:11px;letter-spacing:-0.4px;color:#000">P2</div><div class="t" style="left:684.1px;width:26px;text-align:center;top:415px;font-size:11px;letter-spacing:-0.4px;color:#000">P3</div><div class="t" style="left:704.2px;width:26px;text-align:center;top:415px;font-size:11px;letter-spacing:-0.4px;color:#000">P4</div><div class="t" style="left:724.4px;width:26px;text-align:center;top:415px;font-size:11px;letter-spacing:-0.4px;color:#000">P5</div><div class="t" style="left:744.5px;width:26px;text-align:center;top:415px;font-size:11px;letter-spacing:-0.4px;color:#000">P6</div><div class="t" style="left:764.7px;width:26px;text-align:center;top:415px;font-size:11px;letter-spacing:-0.4px;color:#000">P7</div><div class="t" style="left:784.8px;width:26px;text-align:center;top:415px;font-size:11px;letter-spacing:-0.4px;color:#000">P8</div><div class="t" style="left:805.0px;width:26px;text-align:center;top:415px;font-size:11px;letter-spacing:-0.4px;color:#000">P9</div><div class="t" style="left:825.1px;width:26px;text-align:center;top:415px;font-size:11px;letter-spacing:-0.4px;color:#000">P10</div><div class="t" style="left:845.3px;width:26px;text-align:center;top:415px;font-size:11px;letter-spacing:-0.4px;color:#000">P11</div><div class="t" style="left:865.4px;width:26px;text-align:center;top:415px;font-size:11px;letter-spacing:-0.4px;color:#000">P12</div><div class="t" style="left:885.6px;width:26px;text-align:center;top:415px;font-size:11px;letter-spacing:-0.4px;color:#000">P13</div><div class="t" style="left:905.8px;width:26px;text-align:center;top:415px;font-size:11px;letter-spacing:-0.4px;color:#000">P14</div><div class="t" style="left:925.9px;width:26px;text-align:center;top:415px;font-size:11px;letter-spacing:-0.4px;color:#000">P15</div><div class="t" style="left:946.0px;width:26px;text-align:center;top:415px;font-size:11px;letter-spacing:-0.4px;color:#000">P16</div><div class="t" style="left:621.6px;width:30px;text-align:center;top:426.9px;font-size:10.8px;letter-spacing:-0.6px;color:#000">E1</div><div class="cell gc" style="left:647.8px;top:426.3px">2</div><div class="cell gc" style="left:667.9px;top:426.3px">204</div><div class="cell" style="left:688.1px;top:426.3px"></div><div class="cell" style="left:708.2px;top:426.3px"></div><div class="cell" style="left:728.4px;top:426.3px"></div><div class="cell" style="left:748.5px;top:426.3px"></div><div class="cell" style="left:768.7px;top:426.3px"></div><div class="cell" style="left:788.8px;top:426.3px"></div><div class="cell" style="left:809.0px;top:426.3px"></div><div class="cell" style="left:829.1px;top:426.3px"></div><div class="cell" style="left:849.3px;top:426.3px"></div><div class="cell" style="left:869.4px;top:426.3px"></div><div class="cell" style="left:889.6px;top:426.3px"></div><div class="cell" style="left:909.8px;top:426.3px"></div><div class="cell" style="left:929.9px;top:426.3px"></div><div class="cell" style="left:950.0px;top:426.3px"></div><div class="t" style="left:621.6px;width:30px;text-align:center;top:439.8px;font-size:10.8px;letter-spacing:-0.6px;color:#000">E2</div><div class="cell gc" style="left:647.8px;top:439.2px">0</div><div class="cell" style="left:667.9px;top:439.2px"></div><div class="cell" style="left:688.1px;top:439.2px"></div><div class="cell" style="left:708.2px;top:439.2px"></div><div class="cell" style="left:728.4px;top:439.2px"></div><div class="cell" style="left:748.5px;top:439.2px"></div><div class="cell" style="left:768.7px;top:439.2px"></div><div class="cell" style="left:788.8px;top:439.2px"></div><div class="cell" style="left:809.0px;top:439.2px"></div><div class="cell" style="left:829.1px;top:439.2px"></div><div class="cell" style="left:849.3px;top:439.2px"></div><div class="cell" style="left:869.4px;top:439.2px"></div><div class="cell" style="left:889.6px;top:439.2px"></div><div class="cell" style="left:909.8px;top:439.2px"></div><div class="cell" style="left:929.9px;top:439.2px"></div><div class="cell" style="left:950.0px;top:439.2px"></div><div class="t" style="left:621.6px;width:30px;text-align:center;top:452.6px;font-size:10.8px;letter-spacing:-0.6px;color:#000">E3</div><div class="cell" style="left:647.8px;top:452.0px"></div><div class="cell" style="left:667.9px;top:452.0px"></div><div class="cell" style="left:688.1px;top:452.0px"></div><div class="cell" style="left:708.2px;top:452.0px"></div><div class="cell" style="left:728.4px;top:452.0px"></div><div class="cell" style="left:748.5px;top:452.0px"></div><div class="cell" style="left:768.7px;top:452.0px"></div><div class="cell" style="left:788.8px;top:452.0px"></div><div class="cell" style="left:809.0px;top:452.0px"></div><div class="cell" style="left:829.1px;top:452.0px"></div><div class="cell" style="left:849.3px;top:452.0px"></div><div class="cell" style="left:869.4px;top:452.0px"></div><div class="cell" style="left:889.6px;top:452.0px"></div><div class="cell" style="left:909.8px;top:452.0px"></div><div class="cell" style="left:929.9px;top:452.0px"></div><div class="cell" style="left:950.0px;top:452.0px"></div><div class="t" style="left:621.6px;width:30px;text-align:center;top:465.5px;font-size:10.8px;letter-spacing:-0.6px;color:#000">E4</div><div class="cell" style="left:647.8px;top:464.9px"></div><div class="cell" style="left:667.9px;top:464.9px"></div><div class="cell" style="left:688.1px;top:464.9px"></div><div class="cell" style="left:708.2px;top:464.9px"></div><div class="cell" style="left:728.4px;top:464.9px"></div><div class="cell" style="left:748.5px;top:464.9px"></div><div class="cell" style="left:768.7px;top:464.9px"></div><div class="cell" style="left:788.8px;top:464.9px"></div><div class="cell" style="left:809.0px;top:464.9px"></div><div class="cell" style="left:829.1px;top:464.9px"></div><div class="cell" style="left:849.3px;top:464.9px"></div><div class="cell" style="left:869.4px;top:464.9px"></div><div class="cell" style="left:889.6px;top:464.9px"></div><div class="cell" style="left:909.8px;top:464.9px"></div><div class="cell" style="left:929.9px;top:464.9px"></div><div class="cell" style="left:950.0px;top:464.9px"></div><div class="t" style="left:621.6px;width:30px;text-align:center;top:478.3px;font-size:10.8px;letter-spacing:-0.6px;color:#000">E5</div><div class="cell" style="left:647.8px;top:477.7px"></div><div class="cell" style="left:667.9px;top:477.7px"></div><div class="cell" style="left:688.1px;top:477.7px"></div><div class="cell" style="left:708.2px;top:477.7px"></div><div class="cell" style="left:728.4px;top:477.7px"></div><div class="cell" style="left:748.5px;top:477.7px"></div><div class="cell" style="left:768.7px;top:477.7px"></div><div class="cell" style="left:788.8px;top:477.7px"></div><div class="cell" style="left:809.0px;top:477.7px"></div><div class="cell" style="left:829.1px;top:477.7px"></div><div class="cell" style="left:849.3px;top:477.7px"></div><div class="cell" style="left:869.4px;top:477.7px"></div><div class="cell" style="left:889.6px;top:477.7px"></div><div class="cell" style="left:909.8px;top:477.7px"></div><div class="cell" style="left:929.9px;top:477.7px"></div><div class="cell" style="left:950.0px;top:477.7px"></div><div class="t" style="left:621.6px;width:30px;text-align:center;top:491.2px;font-size:10.8px;letter-spacing:-0.6px;color:#000">E6</div><div class="cell" style="left:647.8px;top:490.6px"></div><div class="cell" style="left:667.9px;top:490.6px"></div><div class="cell" style="left:688.1px;top:490.6px"></div><div class="cell" style="left:708.2px;top:490.6px"></div><div class="cell" style="left:728.4px;top:490.6px"></div><div class="cell" style="left:748.5px;top:490.6px"></div><div class="cell" style="left:768.7px;top:490.6px"></div><div class="cell" style="left:788.8px;top:490.6px"></div><div class="cell" style="left:809.0px;top:490.6px"></div><div class="cell" style="left:829.1px;top:490.6px"></div><div class="cell" style="left:849.3px;top:490.6px"></div><div class="cell" style="left:869.4px;top:490.6px"></div><div class="cell" style="left:889.6px;top:490.6px"></div><div class="cell" style="left:909.8px;top:490.6px"></div><div class="cell" style="left:929.9px;top:490.6px"></div><div class="cell" style="left:950.0px;top:490.6px"></div><div class="t" style="left:621.6px;width:30px;text-align:center;top:504.1px;font-size:10.8px;letter-spacing:-0.6px;color:#000">E7</div><div class="cell" style="left:647.8px;top:503.5px"></div><div class="cell" style="left:667.9px;top:503.5px"></div><div class="cell" style="left:688.1px;top:503.5px"></div><div class="cell" style="left:708.2px;top:503.5px"></div><div class="cell" style="left:728.4px;top:503.5px"></div><div class="cell" style="left:748.5px;top:503.5px"></div><div class="cell" style="left:768.7px;top:503.5px"></div><div class="cell" style="left:788.8px;top:503.5px"></div><div class="cell" style="left:809.0px;top:503.5px"></div><div class="cell" style="left:829.1px;top:503.5px"></div><div class="cell" style="left:849.3px;top:503.5px"></div><div class="cell" style="left:869.4px;top:503.5px"></div><div class="cell" style="left:889.6px;top:503.5px"></div><div class="cell" style="left:909.8px;top:503.5px"></div><div class="cell" style="left:929.9px;top:503.5px"></div><div class="cell" style="left:950.0px;top:503.5px"></div><div class="t" style="left:621.6px;width:30px;text-align:center;top:516.9px;font-size:10.8px;letter-spacing:-0.6px;color:#000">E8</div><div class="cell" style="left:647.8px;top:516.3px"></div><div class="cell" style="left:667.9px;top:516.3px"></div><div class="cell" style="left:688.1px;top:516.3px"></div><div class="cell" style="left:708.2px;top:516.3px"></div><div class="cell" style="left:728.4px;top:516.3px"></div><div class="cell" style="left:748.5px;top:516.3px"></div><div class="cell" style="left:768.7px;top:516.3px"></div><div class="cell" style="left:788.8px;top:516.3px"></div><div class="cell" style="left:809.0px;top:516.3px"></div><div class="cell" style="left:829.1px;top:516.3px"></div><div class="cell" style="left:849.3px;top:516.3px"></div><div class="cell" style="left:869.4px;top:516.3px"></div><div class="cell" style="left:889.6px;top:516.3px"></div><div class="cell" style="left:909.8px;top:516.3px"></div><div class="cell" style="left:929.9px;top:516.3px"></div><div class="cell" style="left:950.0px;top:516.3px"></div><div class="t" style="left:621.6px;width:30px;text-align:center;top:529.8px;font-size:10.8px;letter-spacing:-0.6px;color:#000">E9</div><div class="cell" style="left:647.8px;top:529.2px"></div><div class="cell" style="left:667.9px;top:529.2px"></div><div class="cell" style="left:688.1px;top:529.2px"></div><div class="cell" style="left:708.2px;top:529.2px"></div><div class="cell" style="left:728.4px;top:529.2px"></div><div class="cell" style="left:748.5px;top:529.2px"></div><div class="cell" style="left:768.7px;top:529.2px"></div><div class="cell" style="left:788.8px;top:529.2px"></div><div class="cell" style="left:809.0px;top:529.2px"></div><div class="cell" style="left:829.1px;top:529.2px"></div><div class="cell" style="left:849.3px;top:529.2px"></div><div class="cell" style="left:869.4px;top:529.2px"></div><div class="cell" style="left:889.6px;top:529.2px"></div><div class="cell" style="left:909.8px;top:529.2px"></div><div class="cell" style="left:929.9px;top:529.2px"></div><div class="cell" style="left:950.0px;top:529.2px"></div><div class="t" style="left:621.6px;width:30px;text-align:center;top:542.6px;font-size:10.8px;letter-spacing:-0.6px;color:#000">E10</div><div class="cell gc" style="left:647.8px;top:542.0px">193</div><div class="cell" style="left:667.9px;top:542.0px"></div><div class="cell" style="left:688.1px;top:542.0px"></div><div class="cell" style="left:708.2px;top:542.0px"></div><div class="cell" style="left:728.4px;top:542.0px"></div><div class="cell" style="left:748.5px;top:542.0px"></div><div class="cell" style="left:768.7px;top:542.0px"></div><div class="cell" style="left:788.8px;top:542.0px"></div><div class="cell" style="left:809.0px;top:542.0px"></div><div class="cell" style="left:829.1px;top:542.0px"></div><div class="cell" style="left:849.3px;top:542.0px"></div><div class="cell" style="left:869.4px;top:542.0px"></div><div class="cell" style="left:889.6px;top:542.0px"></div><div class="cell" style="left:909.8px;top:542.0px"></div><div class="cell" style="left:929.9px;top:542.0px"></div><div class="cell" style="left:950.0px;top:542.0px"></div><div class="t" style="left:621.6px;width:30px;text-align:center;top:555.5px;font-size:10.8px;letter-spacing:-0.6px;color:#000">E11</div><div class="cell" style="left:647.8px;top:554.9px"></div><div class="cell" style="left:667.9px;top:554.9px"></div><div class="cell" style="left:688.1px;top:554.9px"></div><div class="cell" style="left:708.2px;top:554.9px"></div><div class="cell" style="left:728.4px;top:554.9px"></div><div class="cell" style="left:748.5px;top:554.9px"></div><div class="cell" style="left:768.7px;top:554.9px"></div><div class="cell" style="left:788.8px;top:554.9px"></div><div class="cell" style="left:809.0px;top:554.9px"></div><div class="cell" style="left:829.1px;top:554.9px"></div><div class="cell" style="left:849.3px;top:554.9px"></div><div class="cell" style="left:869.4px;top:554.9px"></div><div class="cell" style="left:889.6px;top:554.9px"></div><div class="cell" style="left:909.8px;top:554.9px"></div><div class="cell" style="left:929.9px;top:554.9px"></div><div class="cell" style="left:950.0px;top:554.9px"></div><div class="t" style="left:621.6px;width:30px;text-align:center;top:568.4px;font-size:10.8px;letter-spacing:-0.6px;color:#000">E12</div><div class="cell" style="left:647.8px;top:567.8px"></div><div class="cell" style="left:667.9px;top:567.8px"></div><div class="cell" style="left:688.1px;top:567.8px"></div><div class="cell" style="left:708.2px;top:567.8px"></div><div class="cell" style="left:728.4px;top:567.8px"></div><div class="cell" style="left:748.5px;top:567.8px"></div><div class="cell" style="left:768.7px;top:567.8px"></div><div class="cell" style="left:788.8px;top:567.8px"></div><div class="cell" style="left:809.0px;top:567.8px"></div><div class="cell" style="left:829.1px;top:567.8px"></div><div class="cell" style="left:849.3px;top:567.8px"></div><div class="cell" style="left:869.4px;top:567.8px"></div><div class="cell" style="left:889.6px;top:567.8px"></div><div class="cell" style="left:909.8px;top:567.8px"></div><div class="cell" style="left:929.9px;top:567.8px"></div><div class="cell" style="left:950.0px;top:567.8px"></div><div class="t" style="left:621.6px;width:30px;text-align:center;top:581.2px;font-size:10.8px;letter-spacing:-0.6px;color:#000">E13</div><div class="cell" style="left:647.8px;top:580.6px"></div><div class="cell" style="left:667.9px;top:580.6px"></div><div class="cell" style="left:688.1px;top:580.6px"></div><div class="cell" style="left:708.2px;top:580.6px"></div><div class="cell" style="left:728.4px;top:580.6px"></div><div class="cell" style="left:748.5px;top:580.6px"></div><div class="cell" style="left:768.7px;top:580.6px"></div><div class="cell" style="left:788.8px;top:580.6px"></div><div class="cell" style="left:809.0px;top:580.6px"></div><div class="cell" style="left:829.1px;top:580.6px"></div><div class="cell" style="left:849.3px;top:580.6px"></div><div class="cell" style="left:869.4px;top:580.6px"></div><div class="cell" style="left:889.6px;top:580.6px"></div><div class="cell" style="left:909.8px;top:580.6px"></div><div class="cell" style="left:929.9px;top:580.6px"></div><div class="cell" style="left:950.0px;top:580.6px"></div><div class="t" style="left:621.6px;width:30px;text-align:center;top:594.1px;font-size:10.8px;letter-spacing:-0.6px;color:#000">E14</div><div class="cell gc" style="left:647.8px;top:593.5px">60</div><div class="cell gc" style="left:667.9px;top:593.5px">62</div><div class="cell gc" style="left:688.1px;top:593.5px">55</div><div class="cell" style="left:708.2px;top:593.5px"></div><div class="cell" style="left:728.4px;top:593.5px"></div><div class="cell" style="left:748.5px;top:593.5px"></div><div class="cell" style="left:768.7px;top:593.5px"></div><div class="cell" style="left:788.8px;top:593.5px"></div><div class="cell" style="left:809.0px;top:593.5px"></div><div class="cell" style="left:829.1px;top:593.5px"></div><div class="cell" style="left:849.3px;top:593.5px"></div><div class="cell" style="left:869.4px;top:593.5px"></div><div class="cell" style="left:889.6px;top:593.5px"></div><div class="cell" style="left:909.8px;top:593.5px"></div><div class="cell" style="left:929.9px;top:593.5px"></div><div class="cell" style="left:950.0px;top:593.5px"></div><div class="t" style="left:621.6px;width:30px;text-align:center;top:606.9px;font-size:10.8px;letter-spacing:-0.6px;color:#000">E15</div><div class="cell gc" style="left:647.8px;top:606.3px">64</div><div class="cell" style="left:667.9px;top:606.3px"></div><div class="cell" style="left:688.1px;top:606.3px"></div><div class="cell" style="left:708.2px;top:606.3px"></div><div class="cell" style="left:728.4px;top:606.3px"></div><div class="cell" style="left:748.5px;top:606.3px"></div><div class="cell" style="left:768.7px;top:606.3px"></div><div class="cell" style="left:788.8px;top:606.3px"></div><div class="cell" style="left:809.0px;top:606.3px"></div><div class="cell" style="left:829.1px;top:606.3px"></div><div class="cell" style="left:849.3px;top:606.3px"></div><div class="cell" style="left:869.4px;top:606.3px"></div><div class="cell" style="left:889.6px;top:606.3px"></div><div class="cell" style="left:909.8px;top:606.3px"></div><div class="cell" style="left:929.9px;top:606.3px"></div><div class="cell" style="left:950.0px;top:606.3px"></div><div class="t" style="left:621.6px;width:30px;text-align:center;top:619.8px;font-size:10.8px;letter-spacing:-0.6px;color:#000">E16</div><div class="cell gc" style="left:647.8px;top:619.2px">50</div><div class="cell" style="left:667.9px;top:619.2px"></div><div class="cell" style="left:688.1px;top:619.2px"></div><div class="cell" style="left:708.2px;top:619.2px"></div><div class="cell" style="left:728.4px;top:619.2px"></div><div class="cell" style="left:748.5px;top:619.2px"></div><div class="cell" style="left:768.7px;top:619.2px"></div><div class="cell" style="left:788.8px;top:619.2px"></div><div class="cell" style="left:809.0px;top:619.2px"></div><div class="cell" style="left:829.1px;top:619.2px"></div><div class="cell" style="left:849.3px;top:619.2px"></div><div class="cell" style="left:869.4px;top:619.2px"></div><div class="cell" style="left:889.6px;top:619.2px"></div><div class="cell" style="left:909.8px;top:619.2px"></div><div class="cell" style="left:929.9px;top:619.2px"></div><div class="cell" style="left:950.0px;top:619.2px"></div><div class="t" style="left:621.6px;width:30px;text-align:center;top:632.7px;font-size:10.8px;letter-spacing:-0.6px;color:#000">E17</div><div class="cell gc" style="left:647.8px;top:632.1px">48</div><div class="cell gc" style="left:667.9px;top:632.1px">52</div><div class="cell gc" style="left:688.1px;top:632.1px">54</div><div class="cell" style="left:708.2px;top:632.1px"></div><div class="cell" style="left:728.4px;top:632.1px"></div><div class="cell" style="left:748.5px;top:632.1px"></div><div class="cell" style="left:768.7px;top:632.1px"></div><div class="cell" style="left:788.8px;top:632.1px"></div><div class="cell" style="left:809.0px;top:632.1px"></div><div class="cell" style="left:829.1px;top:632.1px"></div><div class="cell" style="left:849.3px;top:632.1px"></div><div class="cell" style="left:869.4px;top:632.1px"></div><div class="cell" style="left:889.6px;top:632.1px"></div><div class="cell" style="left:909.8px;top:632.1px"></div><div class="cell" style="left:929.9px;top:632.1px"></div><div class="cell" style="left:950.0px;top:632.1px"></div><div class="t" style="left:621.6px;width:30px;text-align:center;top:645.5px;font-size:10.8px;letter-spacing:-0.6px;color:#000">E18</div><div class="cell gc" style="left:647.8px;top:644.9px">46</div><div class="cell" style="left:667.9px;top:644.9px"></div><div class="cell" style="left:688.1px;top:644.9px"></div><div class="cell" style="left:708.2px;top:644.9px"></div><div class="cell" style="left:728.4px;top:644.9px"></div><div class="cell" style="left:748.5px;top:644.9px"></div><div class="cell" style="left:768.7px;top:644.9px"></div><div class="cell" style="left:788.8px;top:644.9px"></div><div class="cell" style="left:809.0px;top:644.9px"></div><div class="cell" style="left:829.1px;top:644.9px"></div><div class="cell" style="left:849.3px;top:644.9px"></div><div class="cell" style="left:869.4px;top:644.9px"></div><div class="cell" style="left:889.6px;top:644.9px"></div><div class="cell" style="left:909.8px;top:644.9px"></div><div class="cell" style="left:929.9px;top:644.9px"></div><div class="cell" style="left:950.0px;top:644.9px"></div><div class="t" style="left:621.6px;width:30px;text-align:center;top:658.4px;font-size:10.8px;letter-spacing:-0.6px;color:#000">E19</div><div class="cell gc" style="left:647.8px;top:657.8px">68</div><div class="cell gc" style="left:667.9px;top:657.8px">70</div><div class="cell" style="left:688.1px;top:657.8px"></div><div class="cell" style="left:708.2px;top:657.8px"></div><div class="cell" style="left:728.4px;top:657.8px"></div><div class="cell" style="left:748.5px;top:657.8px"></div><div class="cell" style="left:768.7px;top:657.8px"></div><div class="cell" style="left:788.8px;top:657.8px"></div><div class="cell" style="left:809.0px;top:657.8px"></div><div class="cell" style="left:829.1px;top:657.8px"></div><div class="cell" style="left:849.3px;top:657.8px"></div><div class="cell" style="left:869.4px;top:657.8px"></div><div class="cell" style="left:889.6px;top:657.8px"></div><div class="cell" style="left:909.8px;top:657.8px"></div><div class="cell" style="left:929.9px;top:657.8px"></div><div class="cell" style="left:950.0px;top:657.8px"></div><div class="t" style="left:621.6px;width:30px;text-align:center;top:671.2px;font-size:10.8px;letter-spacing:-0.6px;color:#000">E20</div><div class="cell" style="left:647.8px;top:670.6px"></div><div class="cell" style="left:667.9px;top:670.6px"></div><div class="cell" style="left:688.1px;top:670.6px"></div><div class="cell" style="left:708.2px;top:670.6px"></div><div class="cell" style="left:728.4px;top:670.6px"></div><div class="cell" style="left:748.5px;top:670.6px"></div><div class="cell" style="left:768.7px;top:670.6px"></div><div class="cell" style="left:788.8px;top:670.6px"></div><div class="cell" style="left:809.0px;top:670.6px"></div><div class="cell" style="left:829.1px;top:670.6px"></div><div class="cell" style="left:849.3px;top:670.6px"></div><div class="cell" style="left:869.4px;top:670.6px"></div><div class="cell" style="left:889.6px;top:670.6px"></div><div class="cell" style="left:909.8px;top:670.6px"></div><div class="cell" style="left:929.9px;top:670.6px"></div><div class="cell" style="left:950.0px;top:670.6px"></div><div class="t" style="left:621.6px;width:30px;text-align:center;top:684.1px;font-size:10.8px;letter-spacing:-0.6px;color:#000">E21</div><div class="cell" style="left:647.8px;top:683.5px"></div><div class="cell" style="left:667.9px;top:683.5px"></div><div class="cell" style="left:688.1px;top:683.5px"></div><div class="cell" style="left:708.2px;top:683.5px"></div><div class="cell" style="left:728.4px;top:683.5px"></div><div class="cell" style="left:748.5px;top:683.5px"></div><div class="cell" style="left:768.7px;top:683.5px"></div><div class="cell" style="left:788.8px;top:683.5px"></div><div class="cell" style="left:809.0px;top:683.5px"></div><div class="cell" style="left:829.1px;top:683.5px"></div><div class="cell" style="left:849.3px;top:683.5px"></div><div class="cell" style="left:869.4px;top:683.5px"></div><div class="cell" style="left:889.6px;top:683.5px"></div><div class="cell" style="left:909.8px;top:683.5px"></div><div class="cell" style="left:929.9px;top:683.5px"></div><div class="cell" style="left:950.0px;top:683.5px"></div><div class="t" style="left:621.6px;width:30px;text-align:center;top:697.0px;font-size:10.8px;letter-spacing:-0.6px;color:#000">E22</div><div class="cell" style="left:647.8px;top:696.4px"></div><div class="cell" style="left:667.9px;top:696.4px"></div><div class="cell" style="left:688.1px;top:696.4px"></div><div class="cell" style="left:708.2px;top:696.4px"></div><div class="cell" style="left:728.4px;top:696.4px"></div><div class="cell" style="left:748.5px;top:696.4px"></div><div class="cell" style="left:768.7px;top:696.4px"></div><div class="cell" style="left:788.8px;top:696.4px"></div><div class="cell" style="left:809.0px;top:696.4px"></div><div class="cell" style="left:829.1px;top:696.4px"></div><div class="cell" style="left:849.3px;top:696.4px"></div><div class="cell" style="left:869.4px;top:696.4px"></div><div class="cell" style="left:889.6px;top:696.4px"></div><div class="cell" style="left:909.8px;top:696.4px"></div><div class="cell" style="left:929.9px;top:696.4px"></div><div class="cell" style="left:950.0px;top:696.4px"></div><div class="t" style="left:621.6px;width:30px;text-align:center;top:709.8px;font-size:10.8px;letter-spacing:-0.6px;color:#000">E23</div><div class="cell" style="left:647.8px;top:709.2px"></div><div class="cell" style="left:667.9px;top:709.2px"></div><div class="cell" style="left:688.1px;top:709.2px"></div><div class="cell" style="left:708.2px;top:709.2px"></div><div class="cell" style="left:728.4px;top:709.2px"></div><div class="cell" style="left:748.5px;top:709.2px"></div><div class="cell" style="left:768.7px;top:709.2px"></div><div class="cell" style="left:788.8px;top:709.2px"></div><div class="cell" style="left:809.0px;top:709.2px"></div><div class="cell" style="left:829.1px;top:709.2px"></div><div class="cell" style="left:849.3px;top:709.2px"></div><div class="cell" style="left:869.4px;top:709.2px"></div><div class="cell" style="left:889.6px;top:709.2px"></div><div class="cell" style="left:909.8px;top:709.2px"></div><div class="cell" style="left:929.9px;top:709.2px"></div><div class="cell" style="left:950.0px;top:709.2px"></div><div class="t" style="left:621.6px;width:30px;text-align:center;top:722.7px;font-size:10.8px;letter-spacing:-0.6px;color:#000">E24</div><div class="cell" style="left:647.8px;top:722.1px"></div><div class="cell" style="left:667.9px;top:722.1px"></div><div class="cell" style="left:688.1px;top:722.1px"></div><div class="cell" style="left:708.2px;top:722.1px"></div><div class="cell" style="left:728.4px;top:722.1px"></div><div class="cell" style="left:748.5px;top:722.1px"></div><div class="cell" style="left:768.7px;top:722.1px"></div><div class="cell" style="left:788.8px;top:722.1px"></div><div class="cell" style="left:809.0px;top:722.1px"></div><div class="cell" style="left:829.1px;top:722.1px"></div><div class="cell" style="left:849.3px;top:722.1px"></div><div class="cell" style="left:869.4px;top:722.1px"></div><div class="cell" style="left:889.6px;top:722.1px"></div><div class="cell" style="left:909.8px;top:722.1px"></div><div class="cell" style="left:929.9px;top:722.1px"></div><div class="cell" style="left:950.0px;top:722.1px"></div><div class="t" style="left:621.6px;width:30px;text-align:center;top:735.5px;font-size:10.8px;letter-spacing:-0.6px;color:#000">E25</div><div class="cell gc" style="left:647.8px;top:734.9px">38</div><div class="cell gc" style="left:667.9px;top:734.9px">72</div><div class="cell gc" style="left:688.1px;top:734.9px">74</div><div class="cell gc" style="left:708.2px;top:734.9px">76</div><div class="cell gc" style="left:728.4px;top:734.9px">78</div><div class="cell" style="left:748.5px;top:734.9px"></div><div class="cell" style="left:768.7px;top:734.9px"></div><div class="cell" style="left:788.8px;top:734.9px"></div><div class="cell" style="left:809.0px;top:734.9px"></div><div class="cell" style="left:829.1px;top:734.9px"></div><div class="cell" style="left:849.3px;top:734.9px"></div><div class="cell" style="left:869.4px;top:734.9px"></div><div class="cell" style="left:889.6px;top:734.9px"></div><div class="cell" style="left:909.8px;top:734.9px"></div><div class="cell" style="left:929.9px;top:734.9px"></div><div class="cell" style="left:950.0px;top:734.9px"></div><div class="t" style="left:621.6px;width:30px;text-align:center;top:748.4px;font-size:10.8px;letter-spacing:-0.6px;color:#000">E26</div><div class="cell gc" style="left:647.8px;top:747.8px">80</div><div class="cell" style="left:667.9px;top:747.8px"></div><div class="cell" style="left:688.1px;top:747.8px"></div><div class="cell" style="left:708.2px;top:747.8px"></div><div class="cell" style="left:728.4px;top:747.8px"></div><div class="cell" style="left:748.5px;top:747.8px"></div><div class="cell" style="left:768.7px;top:747.8px"></div><div class="cell" style="left:788.8px;top:747.8px"></div><div class="cell" style="left:809.0px;top:747.8px"></div><div class="cell" style="left:829.1px;top:747.8px"></div><div class="cell" style="left:849.3px;top:747.8px"></div><div class="cell" style="left:869.4px;top:747.8px"></div><div class="cell" style="left:889.6px;top:747.8px"></div><div class="cell" style="left:909.8px;top:747.8px"></div><div class="cell" style="left:929.9px;top:747.8px"></div><div class="cell" style="left:950.0px;top:747.8px"></div><div class="t" style="left:621.6px;width:30px;text-align:center;top:761.3px;font-size:10.8px;letter-spacing:-0.6px;color:#000">E27</div><div class="cell gc" style="left:647.8px;top:760.7px">44</div><div class="cell" style="left:667.9px;top:760.7px"></div><div class="cell" style="left:688.1px;top:760.7px"></div><div class="cell" style="left:708.2px;top:760.7px"></div><div class="cell" style="left:728.4px;top:760.7px"></div><div class="cell" style="left:748.5px;top:760.7px"></div><div class="cell" style="left:768.7px;top:760.7px"></div><div class="cell" style="left:788.8px;top:760.7px"></div><div class="cell" style="left:809.0px;top:760.7px"></div><div class="cell" style="left:829.1px;top:760.7px"></div><div class="cell" style="left:849.3px;top:760.7px"></div><div class="cell" style="left:869.4px;top:760.7px"></div><div class="cell" style="left:889.6px;top:760.7px"></div><div class="cell" style="left:909.8px;top:760.7px"></div><div class="cell" style="left:929.9px;top:760.7px"></div><div class="cell" style="left:950.0px;top:760.7px"></div><div class="t" style="left:621.6px;width:30px;text-align:center;top:774.1px;font-size:10.8px;letter-spacing:-0.6px;color:#000">E28</div><div class="cell" style="left:647.8px;top:773.5px"></div><div class="cell" style="left:667.9px;top:773.5px"></div><div class="cell" style="left:688.1px;top:773.5px"></div><div class="cell" style="left:708.2px;top:773.5px"></div><div class="cell" style="left:728.4px;top:773.5px"></div><div class="cell" style="left:748.5px;top:773.5px"></div><div class="cell" style="left:768.7px;top:773.5px"></div><div class="cell" style="left:788.8px;top:773.5px"></div><div class="cell" style="left:809.0px;top:773.5px"></div><div class="cell" style="left:829.1px;top:773.5px"></div><div class="cell" style="left:849.3px;top:773.5px"></div><div class="cell" style="left:869.4px;top:773.5px"></div><div class="cell" style="left:889.6px;top:773.5px"></div><div class="cell" style="left:909.8px;top:773.5px"></div><div class="cell" style="left:929.9px;top:773.5px"></div><div class="cell" style="left:950.0px;top:773.5px"></div><div class="t" style="left:621.6px;width:30px;text-align:center;top:787.0px;font-size:10.8px;letter-spacing:-0.6px;color:#000">E29</div><div class="cell" style="left:647.8px;top:786.4px"></div><div class="cell" style="left:667.9px;top:786.4px"></div><div class="cell" style="left:688.1px;top:786.4px"></div><div class="cell" style="left:708.2px;top:786.4px"></div><div class="cell" style="left:728.4px;top:786.4px"></div><div class="cell" style="left:748.5px;top:786.4px"></div><div class="cell" style="left:768.7px;top:786.4px"></div><div class="cell" style="left:788.8px;top:786.4px"></div><div class="cell" style="left:809.0px;top:786.4px"></div><div class="cell" style="left:829.1px;top:786.4px"></div><div class="cell" style="left:849.3px;top:786.4px"></div><div class="cell" style="left:869.4px;top:786.4px"></div><div class="cell" style="left:889.6px;top:786.4px"></div><div class="cell" style="left:909.8px;top:786.4px"></div><div class="cell" style="left:929.9px;top:786.4px"></div><div class="cell" style="left:950.0px;top:786.4px"></div><div class="t" style="left:621.6px;width:30px;text-align:center;top:799.8px;font-size:10.8px;letter-spacing:-0.6px;color:#000">E30</div><div class="cell gc" style="left:647.8px;top:799.2px">1</div><div class="cell" style="left:667.9px;top:799.2px"></div><div class="cell" style="left:688.1px;top:799.2px"></div><div class="cell" style="left:708.2px;top:799.2px"></div><div class="cell" style="left:728.4px;top:799.2px"></div><div class="cell" style="left:748.5px;top:799.2px"></div><div class="cell" style="left:768.7px;top:799.2px"></div><div class="cell" style="left:788.8px;top:799.2px"></div><div class="cell" style="left:809.0px;top:799.2px"></div><div class="cell" style="left:829.1px;top:799.2px"></div><div class="cell" style="left:849.3px;top:799.2px"></div><div class="cell" style="left:869.4px;top:799.2px"></div><div class="cell" style="left:889.6px;top:799.2px"></div><div class="cell" style="left:909.8px;top:799.2px"></div><div class="cell" style="left:929.9px;top:799.2px"></div><div class="cell" style="left:950.0px;top:799.2px"></div><div class="t" style="left:621.6px;width:30px;text-align:center;top:812.7px;font-size:10.8px;letter-spacing:-0.6px;color:#000">E31</div><div class="cell" style="left:647.8px;top:812.1px"></div><div class="cell" style="left:667.9px;top:812.1px"></div><div class="cell" style="left:688.1px;top:812.1px"></div><div class="cell" style="left:708.2px;top:812.1px"></div><div class="cell" style="left:728.4px;top:812.1px"></div><div class="cell" style="left:748.5px;top:812.1px"></div><div class="cell" style="left:768.7px;top:812.1px"></div><div class="cell" style="left:788.8px;top:812.1px"></div><div class="cell" style="left:809.0px;top:812.1px"></div><div class="cell" style="left:829.1px;top:812.1px"></div><div class="cell" style="left:849.3px;top:812.1px"></div><div class="cell" style="left:869.4px;top:812.1px"></div><div class="cell" style="left:889.6px;top:812.1px"></div><div class="cell" style="left:909.8px;top:812.1px"></div><div class="cell" style="left:929.9px;top:812.1px"></div><div class="cell" style="left:950.0px;top:812.1px"></div><div class="t" style="left:621.6px;width:30px;text-align:center;top:825.6px;font-size:10.8px;letter-spacing:-0.6px;color:#000">E32</div><div class="cell" style="left:647.8px;top:825.0px"></div><div class="cell" style="left:667.9px;top:825.0px"></div><div class="cell" style="left:688.1px;top:825.0px"></div><div class="cell" style="left:708.2px;top:825.0px"></div><div class="cell" style="left:728.4px;top:825.0px"></div><div class="cell" style="left:748.5px;top:825.0px"></div><div class="cell" style="left:768.7px;top:825.0px"></div><div class="cell" style="left:788.8px;top:825.0px"></div><div class="cell" style="left:809.0px;top:825.0px"></div><div class="cell" style="left:829.1px;top:825.0px"></div><div class="cell" style="left:849.3px;top:825.0px"></div><div class="cell" style="left:869.4px;top:825.0px"></div><div class="cell" style="left:889.6px;top:825.0px"></div><div class="cell" style="left:909.8px;top:825.0px"></div><div class="cell" style="left:929.9px;top:825.0px"></div><div class="cell" style="left:950.0px;top:825.0px"></div><div class="a" style="left:996px;top:256px;width:18px;height:620px;background:#fff;border-left:1px solid #a8a8a8"></div><div class="t" style="left:1011px;top:268px;transform-origin:0 0;transform:rotate(90deg);font-size:10.3px;letter-spacing:-0.15px;color:#111">Funktionen: Typ 49</div><div class="a" style="left:999px;top:360px;width:13px;height:1px;background:#a0a0a0"></div><div class="t" style="left:1011px;top:364px;transform-origin:0 0;transform:rotate(90deg);font-size:10.3px;letter-spacing:-0.15px;color:#111">Abläufe: Typ 49</div><div class="a" style="left:999px;top:440px;width:13px;height:1px;background:#c0c0c0"></div><div class="a" style="left:49px;top:882px;width:966px;height:21px;background:#fff;border-top:1px solid #a0a0a0"></div><div class="t" style="left:62px;top:888px;font-size:10.3px;letter-spacing:-0.25px;color:#111">Systemprotokoll</div><div class="a" style="left:135px;top:885px;width:1px;height:14px;background:#a0a0a0"></div><div class="t" style="left:139px;top:888px;font-size:10.3px;letter-spacing:-0.15px;color:#111">Bearbeiten: Symbole: Typ 49</div><div class="a" style="left:271px;top:885px;width:1px;height:14px;background:#a0a0a0"></div><div class="a" style="left:49px;top:902px;width:966px;height:1px;background:#d0d0d0"></div><div class="a" style="left:49px;top:903px;width:966px;height:20px;background:#00f000;border-top:1px solid #80f080"></div><div class="t" style="left:50px;top:908px;font-size:11px;letter-spacing:0px;color:#1b3b1b">Angemeldeter Benutzer: Admin (Admin)</div><div class="a" style="left:156px;top:256px;width:407px;height:106px;background:#f0f0f0;border:1px solid #979797;box-shadow:2px 2px 2px rgba(0,0,0,.35)"></div><div class="a" style="left:182px;top:258px;width:1px;height:102px;background:#e2e3e3"></div><div class="a" style="left:183px;top:258px;width:1px;height:102px;background:#fff"></div><div class="t" style="left:187px;top:262.8px;font-size:10.6px;letter-spacing:-0.05px;color:#1b2430">Anzeigen: Symbole: Typ 48</div><div class="t" style="left:187px;top:282.9px;font-size:10.6px;letter-spacing:-0.05px;color:#1b2430">Anzeigen: Typ 48 -&gt; F35: (Rob: 3) Z1: Turboanschluss AS (AFO3)</div><div class="t" style="left:187px;top:303.1px;font-size:10.6px;letter-spacing:-0.05px;color:#1b2430">Anzeigen: Symbole: Typ 49</div><div class="t" style="left:187px;top:323.2px;font-size:10.6px;letter-spacing:-0.05px;color:#1b2430">Anzeigen: Typ 49 -&gt; F35: (Rob: 18) Z1: Turboanschluss AS (2AFO18)</div><div class="t" style="left:187px;top:343.4px;font-size:10.6px;letter-spacing:-0.05px;color:#1b2430">Anzeigen: Typ 49 -&gt; 2: Produkt B</div></body></html>
